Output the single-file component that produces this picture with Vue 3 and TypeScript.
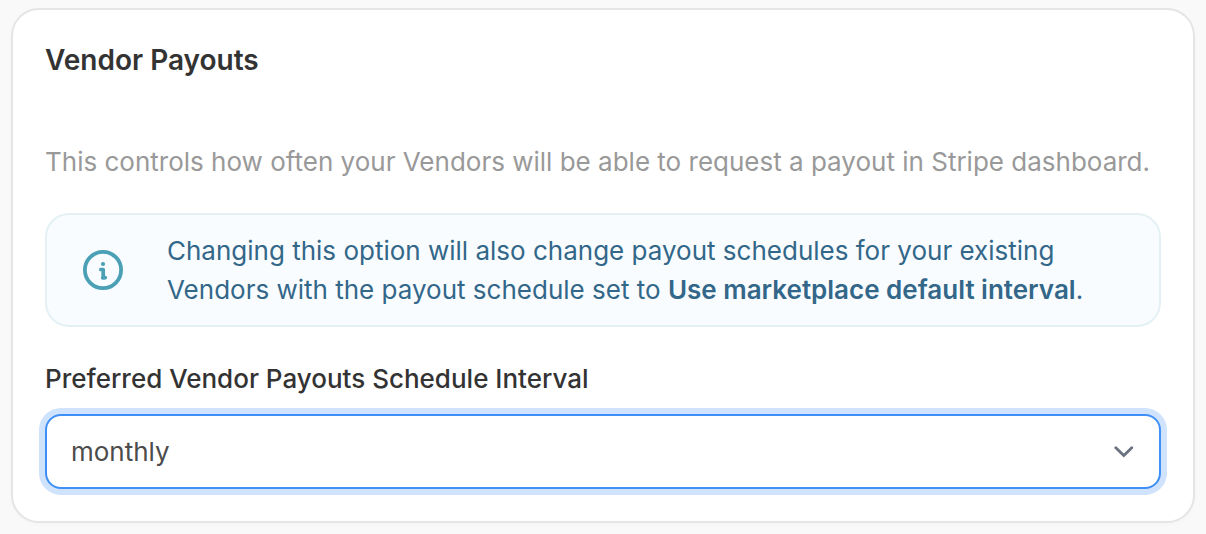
<script setup lang="ts">
import { ref } from 'vue'

const interval = ref<string>('monthly')
</script>

<template>
  <main class="page">
    <section class="card">
      <h2 class="title">Vendor Payouts</h2>
      <p class="description">This controls how often your Vendors will be able to request a payout in Stripe dashboard.</p>
      <div class="notice">
        <svg class="info" viewBox="0 0 42 42" fill="none" aria-hidden="true">
          <circle cx="21" cy="21" r="18.1" stroke="currentColor" stroke-width="3.8" />
          <circle cx="21" cy="15" r="2.1" fill="currentColor" />
          <path d="M18.8 20.5H21.2V28.6H23.3" stroke="currentColor" stroke-width="3.7" stroke-linecap="round" stroke-linejoin="round" />
          <path d="M20.4 29H22" stroke="currentColor" stroke-width="3.2" stroke-linecap="round" />
        </svg>
        <p class="message">Changing this option will also change payout schedules for your existing<br />Vendors with the payout schedule set to <strong>Use marketplace default interval</strong>.</p>
      </div>
      <div class="label">Preferred Vendor Payouts Schedule Interval</div>
      <button class="select" type="button">
        <span>{{ interval }}</span>
        <svg class="chevron" viewBox="0 0 20 12" fill="none" aria-hidden="true">
          <path d="M1.8 1.7L9.8 9.5L17.8 1.7" stroke="currentColor" stroke-width="2.8" stroke-linecap="round" />
        </svg>
      </button>
    </section>
  </main>
</template>

<style>
body { margin: 0; background: #f9f9f9; }
</style>

<style scoped>
.page {
  box-sizing: border-box;
  height: 534px;
  padding: 8px 11px 11px;
  background: #f9f9f9;
  font-family: Inter, "Liberation Sans", sans-serif;
}
.card {
  box-sizing: border-box;
  height: 515px;
  padding: 32px 32px 0;
  border: 2px solid #e5e5e5;
  border-radius: 28px;
  background: #fff;
  box-shadow: 0 2px 4px rgba(0, 0, 0, 0.02);
}
.title {
  margin: 0;
  color: #333;
  font-size: 28px;
  line-height: 36px;
  font-weight: 600;
}
.description {
  margin: 64px 0 0;
  color: #999;
  font-size: 26px;
  line-height: 40px;
  white-space: nowrap;
}
.notice {
  box-sizing: border-box;
  display: flex;
  align-items: center;
  height: 114px;
  margin-top: 31px;
  padding-left: 35px;
  border: 2px solid #e4f1f4;
  border-radius: 24px;
  background: #f8fcff;
}
.info { flex: none; width: 42px; height: 42px; color: #4ba0b5; }
.message {
  margin: 0 0 0 43px;
  color: #336789;
  font-size: 26px;
  line-height: 39px;
  white-space: nowrap;
}
.message strong { font-weight: 600; }
.label {
  margin-top: 34px;
  color: #333;
  font-size: 26px;
  line-height: 36px;
  font-weight: 500;
}
.select {
  box-sizing: border-box;
  display: flex;
  align-items: center;
  justify-content: space-between;
  width: 100%;
  height: 75px;
  margin-top: 17px;
  padding: 0 25px 0 24px;
  border: 2px solid #3e8ff7;
  border-radius: 16px;
  background: #fff;
  box-shadow: 0 0 0 6px #cfe3fd;
  color: #4c4c4c;
  font: 400 26px/36px Inter, "Liberation Sans", sans-serif;
  text-align: left;
}
.chevron { width: 20px; height: 12px; color: #6b7280; }
</style>
